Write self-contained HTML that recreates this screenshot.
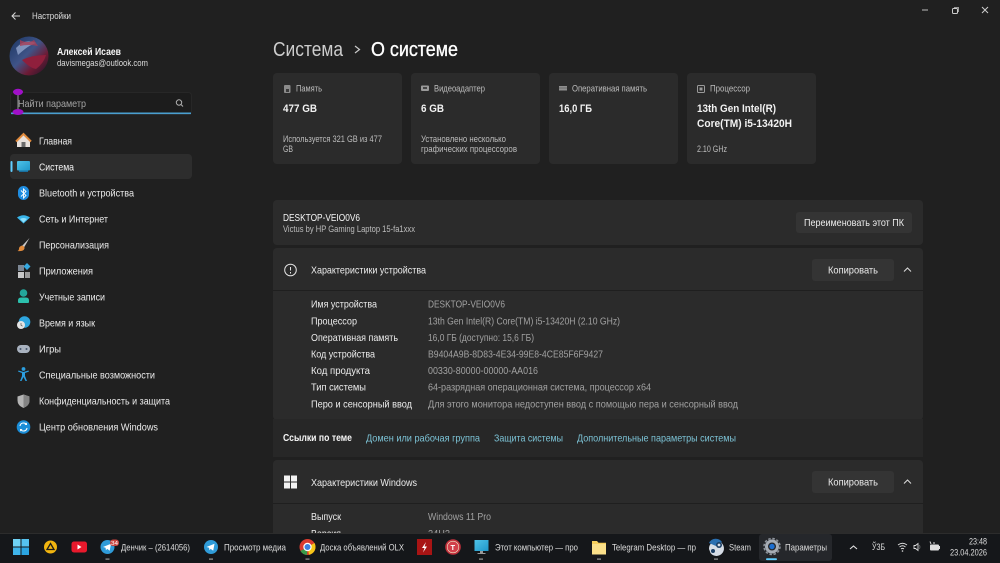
<!DOCTYPE html>
<html lang="ru"><head><meta charset="utf-8"><title>Настройки</title>
<style>
html,body{margin:0;padding:0;width:1000px;height:563px;overflow:hidden;background:#202020}
svg{display:block;position:absolute;left:0;top:0}
text{font-family:"Liberation Sans","Noto Sans CJK SC",sans-serif;font-size:10.1px;fill:#ececec}
.m{fill:#a2a2a2}.w{fill:#f6f6f6}.s{font-size:9.1px;fill:#bdbdbd}
.b{font-weight:bold;font-size:11px;fill:#f2f2f2}.l{fill:#7cc3d6}.t{font-size:9.2px;fill:#dcdcdc}
</style></head><body>
<svg width="1000" height="563" viewBox="0 0 1000 563" xmlns="http://www.w3.org/2000/svg">
<defs>
<linearGradient id="av" x1="0" y1="0" x2="1" y2="1"><stop offset="0" stop-color="#1a3460"/><stop offset=".45" stop-color="#3f5488"/><stop offset=".7" stop-color="#6d1a34"/><stop offset="1" stop-color="#17172a"/></linearGradient>
<linearGradient id="sc" x1="0" y1="0" x2="1" y2="1"><stop offset="0" stop-color="#4fc3e8"/><stop offset="1" stop-color="#1f97c9"/></linearGradient>
</defs>
<rect width="1000" height="563" fill="#202020"/>

<!-- title bar -->
<path d="M20 16H12M15.500 12.500L12 16L15.500 19.500" fill="none" stroke="#d8d8d8" stroke-width="1"/>
<text x="32" y="19" class="t" textLength="39" lengthAdjust="spacingAndGlyphs">Настройки</text>
<path d="M922 10h6" stroke="#bbb" stroke-width="1"/>
<rect x="952.500" y="8.500" width="5" height="5" rx="1" fill="none" stroke="#ccc"/><path d="M954 7.500h4.500v4.500" fill="none" stroke="#999"/>
<path d="M982 7l6 6M988 7l-6 6" stroke="#ccc" stroke-width="1"/>

<!-- user -->
<circle cx="29" cy="56" r="19.500" fill="url(#av)"/>
<path d="M16 48q9-10 20-5q-6 2-11 6t-7 6z" fill="#9fb2d8" opacity=".7"/>
<path d="M22 60q10-5 24-5q-2 8-10 14q-6-1-14-9z" fill="#8f1f3c"/>
<path d="M20 40q8 4 14 0l4 6q-10-2-18 0z" fill="#a63d55" opacity=".8"/>
<text x="57" y="55" class="w" font-weight="bold" textLength="64" lengthAdjust="spacingAndGlyphs">Алексей Исаев</text>
<text x="57" y="66" class="t" textLength="91" lengthAdjust="spacingAndGlyphs">davismegas@outlook.com</text>

<!-- search -->
<rect x="10.500" y="92.500" width="181" height="22" rx="3" fill="#1c1c1c" stroke="#272727"/>
<rect x="11" y="112.500" width="180" height="1.600" fill="#4a9fd0"/>
<text x="18" y="107" style="fill:#a5a5a5" textLength="68" lengthAdjust="spacingAndGlyphs">Найти параметр</text>
<circle cx="179" cy="102.500" r="2.700" fill="none" stroke="#b0b0b0"/><path d="M181 104.500l2 2" stroke="#b0b0b0"/>
<rect x="17.500" y="93" width="1" height="20" fill="#9a9a9a"/>
<ellipse cx="18" cy="92" rx="5" ry="3.200" fill="#a010c8"/>
<ellipse cx="18" cy="112" rx="5.500" ry="3" fill="#a010c8"/>

<!-- nav -->
<rect x="10" y="154" width="182" height="25" rx="4" fill="#2d2d2d"/>
<rect x="10.500" y="161" width="2" height="11" rx="1" fill="#60cdff"/>

<path d="M17 141.500L23.500 135L30 141.500V147H17z" fill="#e8e1dc"/><path d="M16 141.500L23.500 134L31 141.500" fill="none" stroke="#e08a3c" stroke-width="2"/><rect x="21.500" y="142" width="4" height="5" fill="#6b6b6b"/>
<text x="39" y="144.500" textLength="33" lengthAdjust="spacingAndGlyphs">Главная</text>

<rect x="17" y="161" width="13" height="9.500" rx="1" fill="url(#sc)"/><rect x="19" y="170.500" width="9" height="1.500" fill="#1a6f9e"/>
<text x="39" y="170.500" class="w" textLength="35" lengthAdjust="spacingAndGlyphs">Система</text>

<rect x="18" y="186" width="11" height="14" rx="5.500" fill="#1f8de0"/><path d="M21 190.500l5 5-2.500 2.500v-9l2.500 2.500-5 5" fill="none" stroke="#fff" stroke-width=".9"/>
<text x="39" y="196.500" textLength="95" lengthAdjust="spacingAndGlyphs">Bluetooth и устройства</text>

<path d="M17 217.500q6.500-4.500 13 0l-6.500 6z" fill="#39b5ea"/><path d="M20 219q3.500-2 7 0l-3.500 3.500z" fill="#8fe0fb"/>
<text x="39" y="222.500" textLength="69" lengthAdjust="spacingAndGlyphs">Сеть и Интернет</text>

<path d="M29.500 238L22 246l2 1.500z" fill="#c9c9c9"/><path d="M22 245.500q-3 1-3 3t-1.500 2.500q5 .5 6.500-1.500 1-1.500 0-3z" fill="#e08a3c"/>
<text x="39" y="248.500" textLength="70" lengthAdjust="spacingAndGlyphs">Персонализация</text>

<rect x="18" y="265" width="6" height="6" fill="#7d8794"/><rect x="18" y="272" width="6" height="6" fill="#c8c8c8"/><rect x="25" y="272" width="5" height="6" fill="#9a9a9a"/><path d="M27 263l3.500 3.500L27 270l-3.500-3.500z" fill="#35a8e0"/>
<text x="39" y="274.500" textLength="54" lengthAdjust="spacingAndGlyphs">Приложения</text>

<circle cx="23.500" cy="293" r="3.800" fill="#23a79b"/><path d="M18 302v-1.500q0-3 3-3h5q3 0 3 3v1.500q0 1-1 1H19q-1 0-1-1z" fill="#2cc0ad"/>
<text x="39" y="300.500" textLength="66" lengthAdjust="spacingAndGlyphs">Учетные записи</text>

<circle cx="24.500" cy="322" r="5.800" fill="#2ea6df"/><circle cx="21" cy="325" r="4" fill="#e4e4e4"/><path d="M21 323v2.200l1.500 1" fill="none" stroke="#555" stroke-width=".7"/>
<text x="39" y="326.500" textLength="56" lengthAdjust="spacingAndGlyphs">Время и язык</text>

<rect x="17" y="345" width="13" height="8" rx="4" fill="#a9b2bf"/><circle cx="20.500" cy="349" r="1" fill="#44546a"/><circle cx="26.500" cy="349" r="1" fill="#44546a"/>
<text x="39" y="352.500" textLength="22" lengthAdjust="spacingAndGlyphs">Игры</text>

<circle cx="23.500" cy="369" r="1.900" fill="#2b9fe0"/><path d="M18 371.500l4 1.500v3l-2 5h1.500l2-4 2 4H27l-2-5v-3l4-1.500-.5-1-5 1.500-5-1.500z" fill="#2b9fe0"/>
<text x="39" y="378.500" textLength="116" lengthAdjust="spacingAndGlyphs">Специальные возможности</text>

<path d="M23.500 394.500l6 2v4q0 5-6 7.500q-6-2.500-6-7.500v-4z" fill="#b4b4b4"/><path d="M23.500 394.500l6 2v4q0 5-6 7.500z" fill="#848484"/>
<text x="39" y="404.500" textLength="131" lengthAdjust="spacingAndGlyphs">Конфиденциальность и защита</text>

<circle cx="23.500" cy="427" r="6.800" fill="#1b8ed8"/><path d="M20 426q.5-3 3.500-3 2 0 3 1.500M27 428q-.5 3-3.500 3-2 0-3-1.500" fill="none" stroke="#fff" stroke-width="1.100"/><path d="M27 422.500v2.500h-2.500zM20 431.500V429h2.500z" fill="#fff"/>
<text x="39" y="430.500" textLength="119" lengthAdjust="spacingAndGlyphs">Центр обновления Windows</text>

<!-- heading -->
<text x="273" y="56" style="font-size:20.500px;fill:#cdcdcd" textLength="70" lengthAdjust="spacingAndGlyphs">Система</text>
<path d="M355 46l4.500 3.500L355 53" fill="none" stroke="#c9c9c9" stroke-width="1.200"/>
<text x="371" y="56" style="font-size:20.500px;fill:#fff;stroke:#fff;stroke-width:.35px" textLength="87" lengthAdjust="spacingAndGlyphs">О системе</text>

<!-- top cards -->
<rect x="273" y="73" width="129" height="91" rx="4" fill="#2b2b2b"/>
<rect x="411" y="73" width="129" height="91" rx="4" fill="#2b2b2b"/>
<rect x="549" y="73" width="129" height="91" rx="4" fill="#2b2b2b"/>
<rect x="687" y="73" width="129" height="91" rx="4" fill="#2b2b2b"/>

<rect x="284" y="85" width="6.500" height="8" rx="1" fill="#8b8b8b"/><rect x="286" y="89" width="3" height="3" fill="#3a3a3a"/>
<text x="296" y="91.500" class="s" textLength="26" lengthAdjust="spacingAndGlyphs">Память</text>
<text x="283" y="112" class="b" textLength="34" lengthAdjust="spacingAndGlyphs">477 GB</text>
<text x="283" y="142" class="s" textLength="99" lengthAdjust="spacingAndGlyphs">Используется 321 GB из 477</text>
<text x="283" y="152" class="s" textLength="10" lengthAdjust="spacingAndGlyphs">GB</text>

<rect x="421" y="85.500" width="8" height="5.500" rx="1" fill="#9a9a9a"/><rect x="423" y="87" width="4" height="2" fill="#444"/>
<text x="434" y="91.500" class="s" textLength="51" lengthAdjust="spacingAndGlyphs">Видеоадаптер</text>
<text x="421" y="112" class="b" textLength="23" lengthAdjust="spacingAndGlyphs">6 GB</text>
<text x="421" y="142" class="s" textLength="85" lengthAdjust="spacingAndGlyphs">Установлено несколько</text>
<text x="421" y="152" class="s" textLength="96" lengthAdjust="spacingAndGlyphs">графических процессоров</text>

<rect x="559" y="86" width="8" height="4.500" fill="#8f8f8f"/><path d="M559 88h8" stroke="#444" stroke-width=".5"/>
<text x="572" y="91.500" class="s" textLength="75" lengthAdjust="spacingAndGlyphs">Оперативная память</text>
<text x="559" y="112" class="b" textLength="33" lengthAdjust="spacingAndGlyphs">16,0 ГБ</text>

<rect x="697.500" y="85.500" width="7" height="7" rx="1" fill="none" stroke="#9a9a9a"/><rect x="699.500" y="87.500" width="3" height="3" fill="#9a9a9a"/>
<text x="710" y="91.500" class="s" textLength="40" lengthAdjust="spacingAndGlyphs">Процессор</text>
<text x="697" y="112" class="b" textLength="79" lengthAdjust="spacingAndGlyphs">13th Gen Intel(R)</text>
<text x="697" y="127" class="b" textLength="95" lengthAdjust="spacingAndGlyphs">Core(TM) i5-13420H</text>
<text x="697" y="152" class="s" textLength="30" lengthAdjust="spacingAndGlyphs">2.10 GHz</text>

<!-- device name card -->
<rect x="273" y="200" width="650" height="45" rx="4" fill="#2b2b2b"/>
<text x="283" y="221" class="w" textLength="77" lengthAdjust="spacingAndGlyphs">DESKTOP-VEIO0V6</text>
<text x="283" y="232" class="s" textLength="132" lengthAdjust="spacingAndGlyphs">Victus by HP Gaming Laptop 15-fa1xxx</text>
<rect x="796" y="212" width="116" height="21" rx="3" fill="#343434"/>
<text x="804" y="226" textLength="100" lengthAdjust="spacingAndGlyphs">Переименовать этот ПК</text>

<!-- device spec panel -->
<rect x="273" y="248" width="650" height="172" rx="4" fill="#2b2b2b"/>
<rect x="273" y="290" width="650" height="1" fill="#1f1f1f"/>
<circle cx="290.500" cy="270" r="5.800" fill="none" stroke="#e4e4e4" stroke-width="1"/><path d="M290.500 267v3.500M290.500 272v1.500" stroke="#e4e4e4" stroke-width="1"/>
<text x="311" y="273.500" textLength="115" lengthAdjust="spacingAndGlyphs">Характеристики устройства</text>
<rect x="812" y="259" width="82" height="22" rx="3" fill="#343434"/>
<text x="828" y="273.500" textLength="50" lengthAdjust="spacingAndGlyphs">Копировать</text>
<path d="M904 271.500l3.500-3.500 3.500 3.500" fill="none" stroke="#ddd" stroke-width="1"/>

<text x="311" y="307.500" textLength="66" lengthAdjust="spacingAndGlyphs">Имя устройства</text>
<text x="428" y="307.500" class="m" textLength="77" lengthAdjust="spacingAndGlyphs">DESKTOP-VEIO0V6</text>
<text x="311" y="324.500" textLength="46" lengthAdjust="spacingAndGlyphs">Процессор</text>
<text x="428" y="324.500" class="m" textLength="192" lengthAdjust="spacingAndGlyphs">13th Gen Intel(R) Core(TM) i5-13420H (2.10 GHz)</text>
<text x="311" y="341" textLength="87" lengthAdjust="spacingAndGlyphs">Оперативная память</text>
<text x="428" y="341" class="m" textLength="106" lengthAdjust="spacingAndGlyphs">16,0 ГБ (доступно: 15,6 ГБ)</text>
<text x="311" y="357.500" textLength="64" lengthAdjust="spacingAndGlyphs">Код устройства</text>
<text x="428" y="357.500" class="m" textLength="175" lengthAdjust="spacingAndGlyphs">B9404A9B-8D83-4E34-99E8-4CE85F6F9427</text>
<text x="311" y="374" textLength="59" lengthAdjust="spacingAndGlyphs">Код продукта</text>
<text x="428" y="374" class="m" textLength="110" lengthAdjust="spacingAndGlyphs">00330-80000-00000-AA016</text>
<text x="311" y="390.500" textLength="55" lengthAdjust="spacingAndGlyphs">Тип системы</text>
<text x="428" y="390.500" class="m" textLength="223" lengthAdjust="spacingAndGlyphs">64-разрядная операционная система, процессор x64</text>
<text x="311" y="407.500" textLength="101" lengthAdjust="spacingAndGlyphs">Перо и сенсорный ввод</text>
<text x="428" y="407.500" class="m" textLength="310" lengthAdjust="spacingAndGlyphs">Для этого монитора недоступен ввод с помощью пера и сенсорный ввод</text>

<!-- links -->
<rect x="273" y="419" width="650" height="38" fill="#272727"/>
<text x="283" y="441" class="w" font-weight="bold" textLength="69" lengthAdjust="spacingAndGlyphs">Ссылки по теме</text>
<text x="366" y="441.500" class="l" textLength="114" lengthAdjust="spacingAndGlyphs">Домен или рабочая группа</text>
<text x="494" y="441.500" class="l" textLength="69" lengthAdjust="spacingAndGlyphs">Защита системы</text>
<text x="577" y="441.500" class="l" textLength="159" lengthAdjust="spacingAndGlyphs">Дополнительные параметры системы</text>

<!-- windows panel -->
<rect x="273" y="460" width="650" height="80" rx="4" fill="#2b2b2b"/>
<rect x="273" y="503" width="650" height="1" fill="#1f1f1f"/>
<rect x="284" y="475.500" width="6" height="6" fill="#f2f2f2"/><rect x="291" y="475.500" width="6" height="6" fill="#f2f2f2"/><rect x="284" y="482.500" width="6" height="6" fill="#f2f2f2"/><rect x="291" y="482.500" width="6" height="6" fill="#f2f2f2"/>
<text x="311" y="486" textLength="106" lengthAdjust="spacingAndGlyphs">Характеристики Windows</text>
<rect x="812" y="471" width="82" height="22" rx="3" fill="#343434"/>
<text x="828" y="485.500" textLength="50" lengthAdjust="spacingAndGlyphs">Копировать</text>
<path d="M904 483.500l3.500-3.500 3.500 3.500" fill="none" stroke="#ddd" stroke-width="1"/>
<text x="311" y="520" textLength="30" lengthAdjust="spacingAndGlyphs">Выпуск</text>
<text x="428" y="520" class="m" textLength="63" lengthAdjust="spacingAndGlyphs">Windows 11 Pro</text>
<text x="311" y="537" textLength="30" lengthAdjust="spacingAndGlyphs">Версия</text>
<text x="428" y="537" class="m" textLength="22" lengthAdjust="spacingAndGlyphs">24H2</text>

<!-- taskbar -->
<rect x="0" y="533" width="1000" height="30" fill="#15171a"/>
<rect x="0" y="533" width="1000" height="1" fill="#2c2c2c"/>
<rect x="759" y="534" width="73" height="27" rx="3" fill="#25272b"/>

<rect x="13" y="539" width="7.500" height="7.500" fill="#6fd2f5"/><rect x="21.500" y="539" width="7.500" height="7.500" fill="#55c2ef"/><rect x="13" y="547.500" width="7.500" height="7.500" fill="#3fb4ea"/><rect x="21.500" y="547.500" width="7.500" height="7.500" fill="#2ba5e2"/>

<circle cx="50.500" cy="547" r="6.500" fill="#f2b50f"/><path d="M50.500 543.500l3.500 6h-7z" fill="none" stroke="#1c1c1c" stroke-width="1.300"/>

<rect x="71.500" y="541.500" width="15.500" height="11" rx="2.500" fill="#e8192c"/><path d="M77.500 544.500l4 2.500-4 2.500z" fill="#fff"/>

<circle cx="107.500" cy="547" r="7" fill="#2f9bd8"/><path d="M103 547l8-3.200-1.300 7-2.500-1.900-1.300 1.300-.3-2.400z" fill="#fff"/>
<rect x="110" y="539.500" width="9" height="6.500" rx="3" fill="#c9453f"/>
<text x="111" y="545" style="font-size:5.500px;fill:#fff" textLength="7" lengthAdjust="spacingAndGlyphs">34</text>
<rect x="105.500" y="558.500" width="4" height="1.200" fill="#999"/>
<text x="121" y="550.500" class="t" textLength="69" lengthAdjust="spacingAndGlyphs">Денчик – (2614056)</text>

<circle cx="211" cy="547" r="7" fill="#2f9bd8"/><path d="M206.500 547l8-3.200-1.300 7-2.500-1.900-1.300 1.300-.3-2.400z" fill="#fff"/>
<rect x="209" y="558.500" width="4" height="1.200" fill="#999"/>
<text x="224" y="550.500" class="t" textLength="62" lengthAdjust="spacingAndGlyphs">Просмотр медиа</text>

<circle cx="307.500" cy="547" r="8" fill="#d93b2f"/><path d="M307.500 547l-7 4 a8 8 0 0 0 6.500 4z" fill="#3a9c4a"/><path d="M307.500 547l7-4a8 8 0 0 1-5.500 11.800z" fill="#f5c518"/><circle cx="307.500" cy="547" r="3.600" fill="#3d7fdc" stroke="#fff" stroke-width="1.200"/>
<rect x="305.500" y="558.500" width="4" height="1.200" fill="#999"/>
<text x="320" y="550.500" class="t" textLength="84" lengthAdjust="spacingAndGlyphs">Доска объявлений OLX</text>

<rect x="417" y="539" width="15" height="16" fill="#a81414"/><path d="M426 542l-4 6h2.500l-1.500 4.500 4-6h-2.500z" fill="#fff"/>

<circle cx="453" cy="547" r="7.800" fill="#c2303c"/><circle cx="453" cy="547" r="5.800" fill="#d23f4a" stroke="#eec" stroke-width=".6"/><text x="450.500" y="550" style="font-size:7.500px;font-weight:bold;fill:#fff">T</text>

<rect x="474.500" y="540" width="14" height="11" fill="url(#sc)"/><rect x="480" y="551" width="3" height="2" fill="#999"/><rect x="477.500" y="553" width="8" height="1" fill="#999"/>
<rect x="479" y="558.500" width="4" height="1.200" fill="#999"/>
<text x="495" y="550.500" class="t" textLength="83" lengthAdjust="spacingAndGlyphs">Этот компьютер — про</text>

<path d="M592 541h5l1.500 1.800H606v11.200h-14z" fill="#f7cf5c"/><rect x="592" y="544" width="14" height="10.500" fill="#fbe08a"/>
<rect x="597" y="558.500" width="4" height="1.200" fill="#999"/>
<text x="612" y="550.500" class="t" textLength="84" lengthAdjust="spacingAndGlyphs">Telegram Desktop — пр</text>

<path d="M709 549a7.500 7.500 0 1 1 1.500 4z" fill="#d6dde6"/><path d="M709 543a7.500 7.500 0 0 1 13-1l-6 4z" fill="#2a6fb0"/><circle cx="719" cy="545" r="3" fill="#1b3e63"/><circle cx="719" cy="545" r="1.400" fill="#d6dde6"/><circle cx="713" cy="551" r="2" fill="#1b3e63"/>
<rect x="714" y="558.500" width="4" height="1.200" fill="#999"/>
<text x="729" y="550.500" class="t" textLength="22" lengthAdjust="spacingAndGlyphs">Steam</text>

<circle cx="772" cy="546.500" r="5.500" fill="none" stroke="#a7adb5" stroke-width="3"/><circle cx="772" cy="546.500" r="8" fill="none" stroke="#8f959d" stroke-width="1.500" stroke-dasharray="2.500 1.700"/><circle cx="772" cy="546.500" r="2.700" fill="#1d6fd1"/>
<rect x="766" y="558.300" width="11" height="1.800" rx=".9" fill="#60cdff"/>
<text x="785" y="550.500" class="t" textLength="42" lengthAdjust="spacingAndGlyphs">Параметры</text>

<path d="M850 549l3.500-3 3.500 3" fill="none" stroke="#e0e0e0" stroke-width="1.100"/>
<text x="872" y="550" class="t" textLength="13" lengthAdjust="spacingAndGlyphs">ЎЗБ</text>
<path d="M898 545q4.500-3.500 9 0M899.500 547q3-2.500 6 0M901 549q1.500-1.200 3 0" fill="none" stroke="#ddd" stroke-width=".9"/><circle cx="902.500" cy="551" r=".8" fill="#ddd"/>
<path d="M914 545.500h1.500l2.500-2v7l-2.500-2H914z" fill="none" stroke="#ddd" stroke-width=".9"/><path d="M919.500 545q1 2 0 4" fill="none" stroke="#777" stroke-width=".7"/>
<rect x="930" y="544.500" width="9" height="6" rx="1" fill="#ddd"/><path d="M931 544l-1-2.500M934 544v-2" stroke="#ddd"/><rect x="939" y="546" width="1" height="3" fill="#ddd"/>
<text x="969" y="544.500" class="t" textLength="18" lengthAdjust="spacingAndGlyphs">23:48</text>
<text x="950" y="555.500" class="t" textLength="37" lengthAdjust="spacingAndGlyphs">23.04.2026</text>
</svg>
</body></html>
